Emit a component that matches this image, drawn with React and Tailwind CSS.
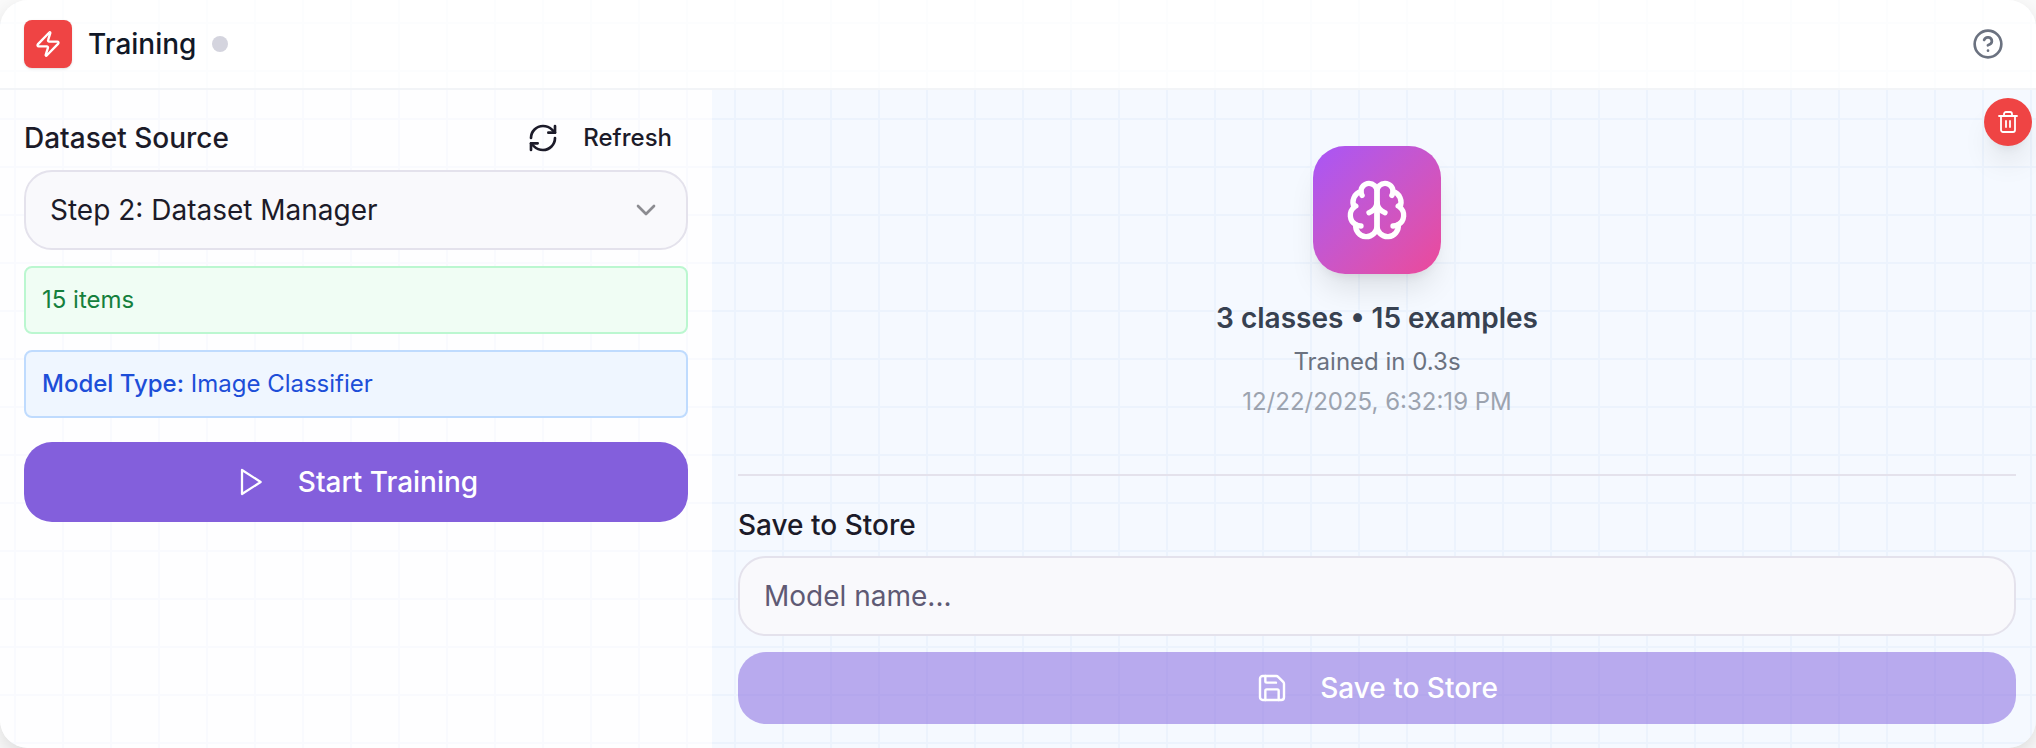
import React, { useState } from 'react';
import { Zap, CircleHelp, RefreshCw, ChevronDown, Save, Trash2 } from 'lucide-react';

const GRID =
  'bg-[linear-gradient(to_right,#e9f0f9_2px,transparent_2px),linear-gradient(to_bottom,#e9f0f9_2px,transparent_2px)] bg-[size:48px_48px] bg-[position:14px_22px]';

const iconProps = {
  viewBox: '0 0 24 24',
  fill: 'none',
  stroke: 'currentColor',
  strokeLinecap: 'round',
  strokeLinejoin: 'round'
};

const PlayIcon = () => (
  <svg {...iconProps} strokeWidth="1.7" className="h-8 w-8">
    <polygon points="6 3 20 12 6 21 6 3" />
  </svg>
);

const BrainIcon = () => (
  <svg {...iconProps} strokeWidth="2" className="h-16 w-16">
    <path d="M12 5a3 3 0 1 0-5.997.125 4 4 0 0 0-2.526 5.77 4 4 0 0 0 .556 6.588A4 4 0 1 0 12 18Z" />
    <path d="M12 5a3 3 0 1 1 5.997.125 4 4 0 0 1 2.526 5.77 4 4 0 0 1-.556 6.588A4 4 0 1 1 12 18Z" />
    <path d="M15 13a4.5 4.5 0 0 1-3-4 4.5 4.5 0 0 1-3 4" />
    <path d="M17.599 6.5a3 3 0 0 0 .399-1.375" />
    <path d="M6.003 5.125A3 3 0 0 0 6.401 6.5" />
    <path d="M3.477 10.896a4 4 0 0 1 .585-.396" />
    <path d="M19.938 10.5a4 4 0 0 1 .585.396" />
    <path d="M6 18a4 4 0 0 1-1.967-.516" />
    <path d="M19.967 17.484A4 4 0 0 1 18 18" />
  </svg>
);

const Header = () => (
  <header className="flex h-[90px] shrink-0 items-center justify-between border-b-2 border-[#f2f4f7] bg-white/85 pr-8 pl-6">
    <div className="flex items-center">
      <div className="flex h-12 w-12 items-center justify-center rounded-lg bg-[#ef4444] text-white shadow-sm">
        <Zap size={28} strokeWidth={2} />
      </div>
      <h1 className="ml-4 text-[28px] leading-10 font-medium text-[#111827]">Training</h1>
      <span className="ml-4 h-4 w-4 rounded-full bg-[#d4d4de]" />
    </div>
    <button className="text-[#6b7280]">
      <CircleHelp size={32} />
    </button>
  </header>
);

const DatasetPanel = () => (
  <section className="flex w-[712px] shrink-0 flex-col bg-[#fdfeff]/75 px-6 pt-4">
    <div className="flex h-16 items-center justify-between pr-4">
      <h2 className="text-[28px] leading-10 font-medium text-[#1c1b29]">Dataset Source</h2>
      <button className="flex items-center gap-6 text-2xl font-medium text-[#1c1b29]">
        <RefreshCw size={32} />
        Refresh
      </button>
    </div>

    <button className="flex h-20 items-center justify-between rounded-[28px] border-2 border-[#e4e2ec] bg-[#f9f9fc] px-6 text-[28px] text-[#1c1b29]">
      Step 2: Dataset Manager
      <ChevronDown size={32} className="text-[#8c8c91]" />
    </button>

    <div className="mt-4 flex h-[68px] items-center rounded-lg border-2 border-[#bbf7d0] bg-[#f0fdf4] px-4 text-2xl text-[#15803d]">
      15 items
    </div>
    <div className="mt-4 h-[68px] rounded-lg border-2 border-[#bfdbfe] bg-[#eff6ff] px-4 text-2xl leading-[64px] text-[#1d4ed8]">
      <span className="font-medium">Model Type:</span> Image Classifier
    </div>

    <button className="mt-6 flex h-20 items-center justify-center gap-8 rounded-[28px] bg-[#835fdc] text-[28px] font-medium text-white">
      <PlayIcon />
      Start Training
    </button>
  </section>
);

const ModelPanel = () => {
  const [name, setName] = useState('');

  return (
    <section className="relative flex flex-1 flex-col bg-[#eef5ff]/60 pr-5 pl-[26px]">
      <div className="flex h-[384px] flex-col items-center pt-14">
        <div className="flex h-32 w-32 items-center justify-center rounded-[32px] bg-gradient-to-br from-[#a855f7] to-[#ec4899] text-white shadow-[0_20px_30px_-6px_rgba(0,0,0,0.1),0_8px_12px_-8px_rgba(0,0,0,0.1)]">
          <BrainIcon />
        </div>
        <p className="mt-6 text-[28px] leading-10 font-semibold text-[#374151]">3 classes • 15 examples</p>
        <p className="mt-1 text-2xl leading-10 text-[#6b7280]">Trained in 0.3s</p>
        <p className="text-2xl leading-10 text-[#9ca3af]">12/22/2025, 6:32:19 PM</p>
      </div>

      <div className="flex flex-col border-t-2 border-[#e4e2ec] pt-[29px]">
        <h2 className="text-[28px] leading-10 font-medium text-[#1c1b29]">Save to Store</h2>
        <input
          value={name}
          onChange={(e) => setName(e.target.value)}
          placeholder="Model name..."
          className="mt-[11px] h-20 rounded-[28px] border-2 border-[#e4e2ec] bg-[#f9f9fc] px-6 text-[28px] placeholder:text-[#5f5a74]"
        />
        <button
          disabled={!name}
          className="mt-4 flex h-[72px] items-center justify-center gap-8 rounded-[28px] bg-[#7b5bdd] text-[28px] font-medium text-white disabled:bg-[#7b5bdd]/50"
        >
          <Save size={32} strokeWidth={1.8} />
          Save to Store
        </button>
      </div>

      {/* Delete the trained model */}
      <button className="absolute top-2 right-1 flex h-12 w-12 items-center justify-center rounded-full bg-[#ef4444] text-white shadow-[0_20px_30px_-6px_rgba(0,0,0,0.1),0_8px_12px_-8px_rgba(0,0,0,0.1)]">
        <Trash2 size={24} strokeWidth={1.8} />
      </button>
    </section>
  );
};

export default function App() {
  return (
    <div className="h-[748px] w-[2036px] overflow-hidden bg-[#fafafa] font-['Inter',sans-serif]">
      <div
        className={`flex h-full flex-col overflow-hidden rounded-[28px] bg-white shadow-[0_8px_20px_rgba(0,0,0,0.12)] ${GRID}`}
      >
        <Header />
        <main className="flex flex-1">
          <DatasetPanel />
          <ModelPanel />
        </main>
      </div>
    </div>
  );
}
